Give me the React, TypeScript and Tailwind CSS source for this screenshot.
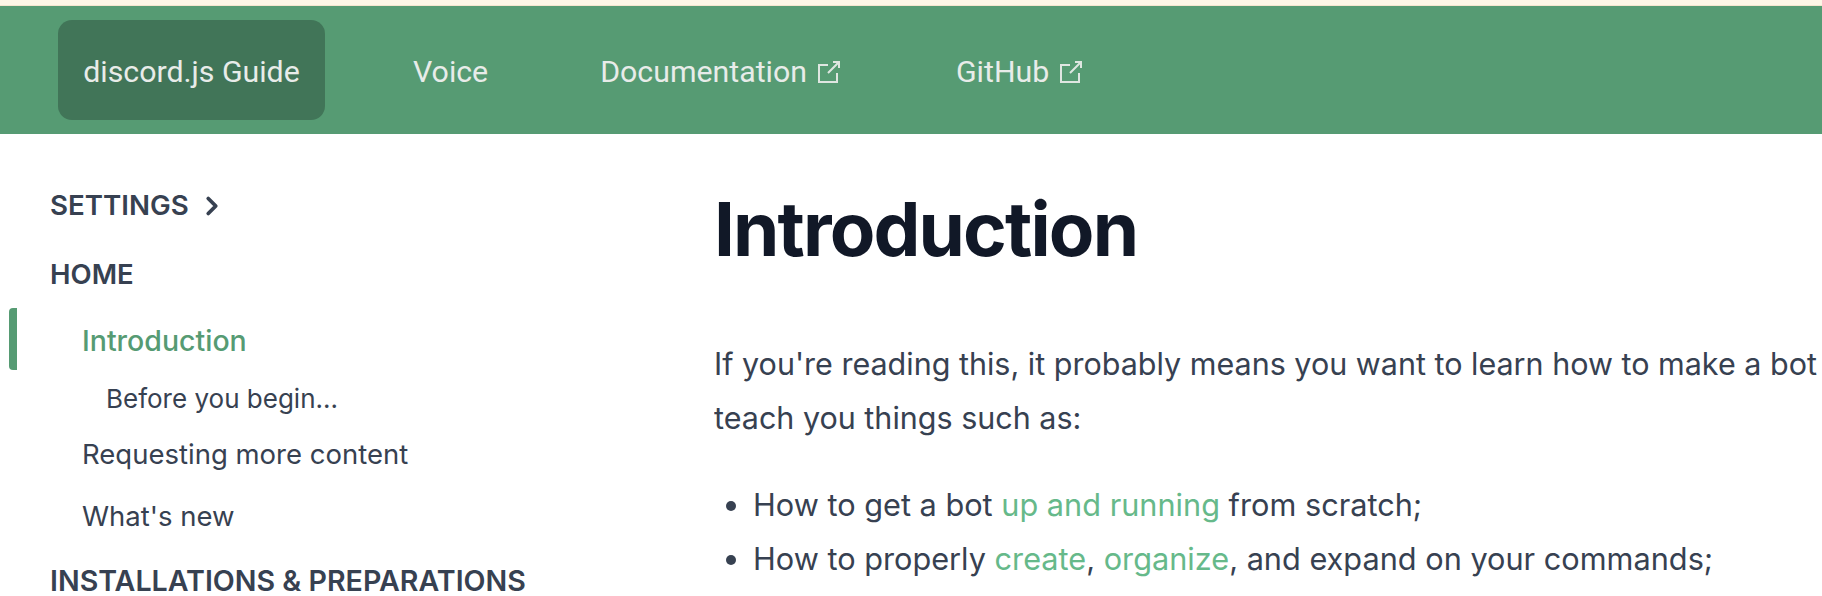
import { ChevronRight } from 'lucide-react';

function OutIcon() {
  return (
    <svg viewBox="0 0 22 22" className="w-[22px] h-[22px] text-[#dfe6e1]" fill="none" stroke="currentColor" strokeWidth="2">
      <path d="M10 4H1v17h18v-9" />
      <path d="M10 12 21 1M15 1h6v6" />
    </svg>
  );
}

function NavLink({ label, external, className }: { label: string; external?: boolean; className: string }) {
  return (
    <a className={`flex items-center gap-[11px] ${className}`}>
      {label}
      {external && <OutIcon />}
    </a>
  );
}

export default function App() {
  return (
    <div className="h-[596px] overflow-hidden bg-white font-['Inter',sans-serif] text-[#374151]">
      <div className="h-[6px] bg-[#fdf6e6] border-b border-[#f5e6cf]" />
      {/* Header */}
      <header className="h-[128px] bg-[#569b73] flex items-center pl-[58px] pt-[3px] text-[30.3px] text-[#e8ece9] font-['Roboto',sans-serif]">
        <a className="-mt-[3px] w-[267px] h-[100px] flex items-center justify-center rounded-[14px] bg-[#417558] pt-[3px]">discord.js Guide</a>
        <NavLink label="Voice" className="ml-[88px]" />
        <NavLink label="Documentation" external className="ml-[112px]" />
        <NavLink label="GitHub" external className="ml-[116px]" />
      </header>

      <div className="flex">
        {/* Sidebar */}
        <aside className="w-[714px] shrink-0 relative pl-[50px] pt-[56px] text-[27.5px]">
          <div className="font-semibold flex items-center gap-[8px] h-[32px]">
            <span className="text-[27.7px]">SETTINGS</span> <ChevronRight className="w-[30px] h-[30px]" strokeWidth={3} />
          </div>
          <div className="font-semibold mt-[37px] h-[32px] flex items-center">HOME</div>
          <div className="absolute left-[9px] top-[174px] w-[8px] h-[62px] rounded-l-[4px] bg-[#569b73]" />
          <div className="ml-[32px] mt-[34px] flex flex-col">
            <div className="h-[32px] flex items-center font-medium text-[28.5px] text-[#569b73]">Introduction</div>
            <div className="h-[32px] flex items-center ml-[24px] mt-[25px] text-[26px]">Before you begin...</div>
            <div className="h-[32px] flex items-center mt-[25px]">Requesting more content</div>
            <div className="h-[32px] flex items-center mt-[30px]">What's new</div>
          </div>
          <div className="font-semibold mt-[34px] h-[28px] leading-[28px] whitespace-nowrap text-[28.6px]">INSTALLATIONS &amp; PREPARATIONS</div>
        </aside>

        {/* Content */}
        <main className="min-w-0 flex-1 overflow-hidden whitespace-nowrap">
          <h1 className="mt-[55px] text-[74.5px] leading-[80px] font-bold text-[#111827] tracking-tight">Introduction</h1>
          <p className="mt-[68px] text-[30.5px] leading-[54px]">If you're reading this, it probably means you want to learn how to make a bot</p>
          <p className="text-[30.5px] leading-[54px]">teach you things such as:</p>
          <ul className="mt-[33px] text-[30.7px] leading-[54px] list-disc pl-[39px]">
            <li>How to get a bot <a className="text-[#66b98a]">up and running</a> from scratch;</li>
            <li>How to properly <a className="text-[#66b98a]">create</a>, <a className="text-[#66b98a]">organize</a>, and expand on your commands;</li>
          </ul>
        </main>
      </div>
    </div>
  );
}
